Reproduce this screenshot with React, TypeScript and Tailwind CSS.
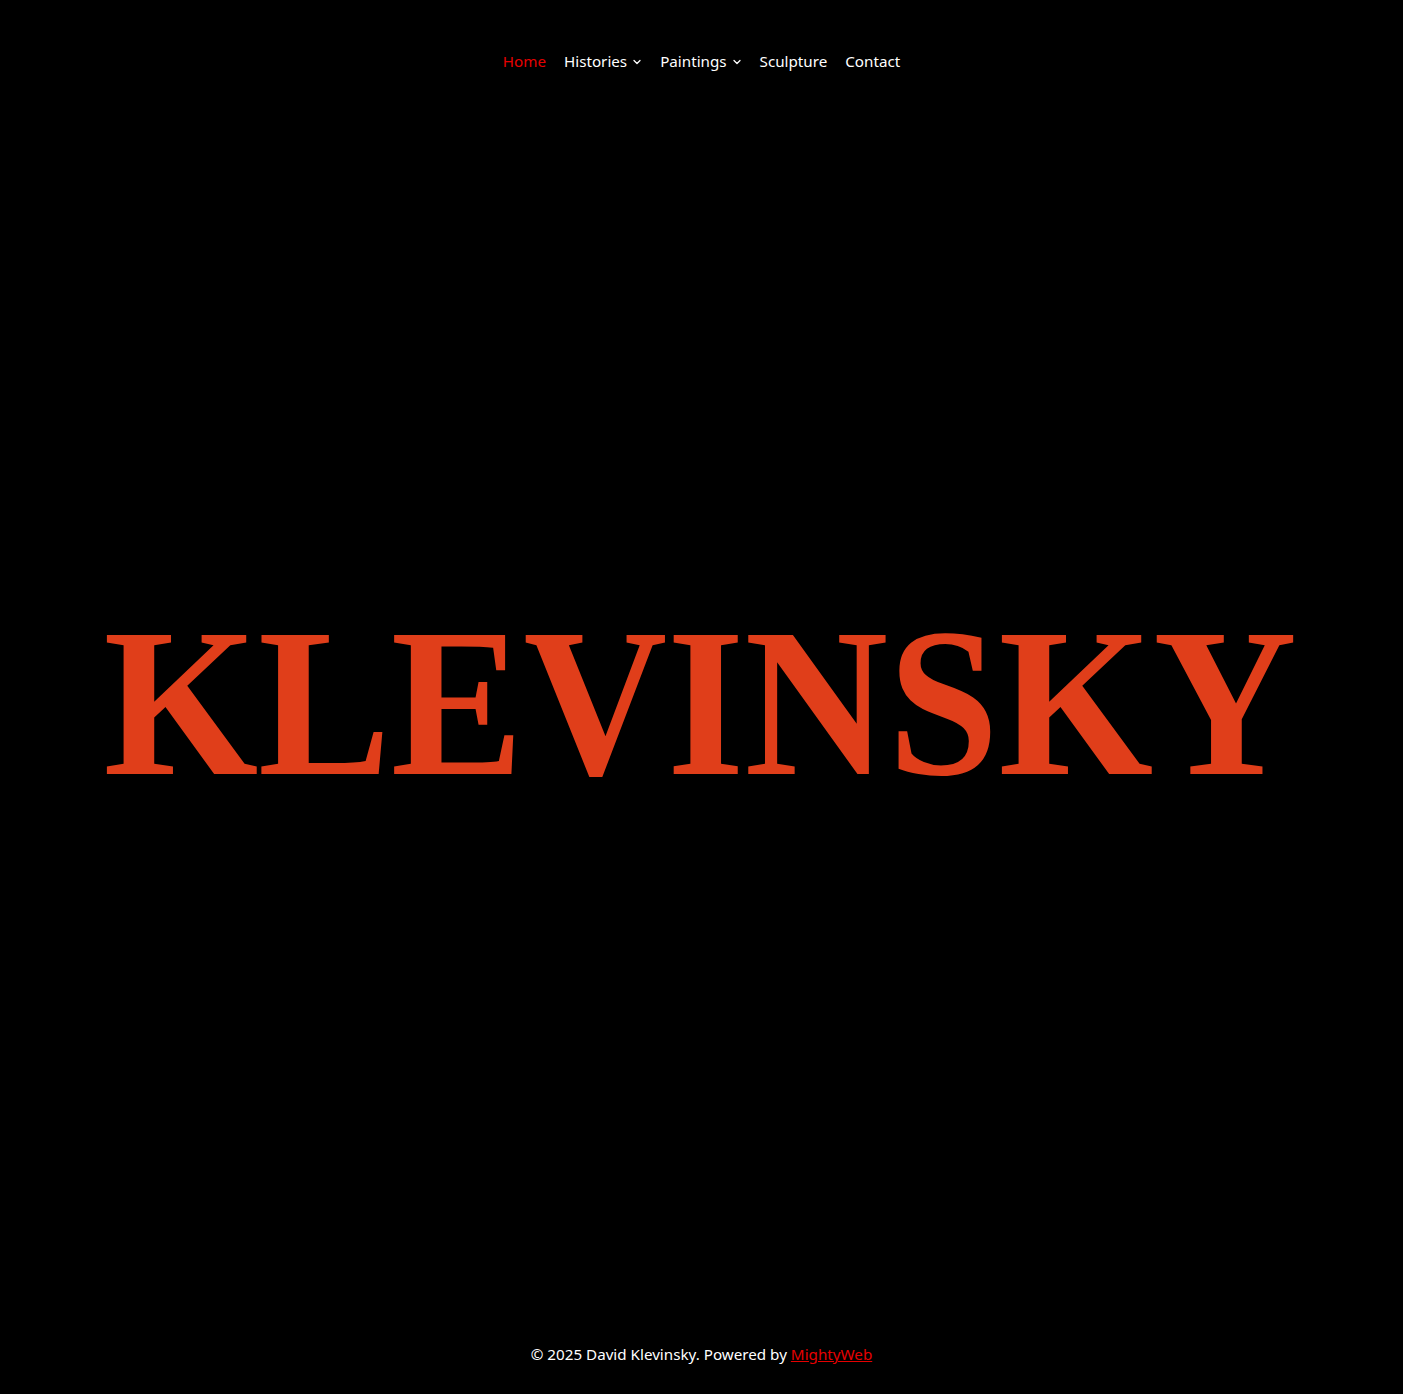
import React from "react";

function Chevron() {
  return (
    <svg width="10" height="10" viewBox="0 0 10 10" className="ml-[5px] mt-[2px]" fill="none" stroke="currentColor" strokeWidth="1.3" strokeLinecap="round" strokeLinejoin="round">
      <path d="M2 3.5 L5 6.5 L8 3.5" />
    </svg>
  );
}

export default function App() {
  const font = { fontFamily: '"Noto Sans", "Open Sans", sans-serif' };
  return (
    <div className="min-h-[1394px] bg-black text-white flex flex-col" style={font}>
      <header className="pt-[49px] flex justify-center">
        <nav className="flex items-center gap-[18px] text-[15.2px] leading-[24px]">
          <a className="text-[#e60000]">Home</a>
          <a className="flex items-center">Histories<Chevron /></a>
          <a className="flex items-center">Paintings<Chevron /></a>
          <a>Sculpture</a>
          <a>Contact</a>
        </nav>
      </header>
      <main className="flex-1 flex items-center justify-center pb-[10px]">
        <h1
          className="text-[#e03e1a] font-bold text-[212px] leading-none tracking-[0px] whitespace-nowrap scale-x-[0.938] translate-x-[-1px]"
          style={{ fontFamily: '"Liberation Serif", "DejaVu Serif", serif' }}
        >
          KLEVINSKY
        </h1>
      </main>
      <footer className="pb-[28px] flex justify-center text-[15.2px] leading-[24px]">
        <p>
          © 2025 David Klevinsky. Powered by <a className="text-[#e60000] underline">MightyWeb</a>
        </p>
      </footer>
    </div>
  );
}
